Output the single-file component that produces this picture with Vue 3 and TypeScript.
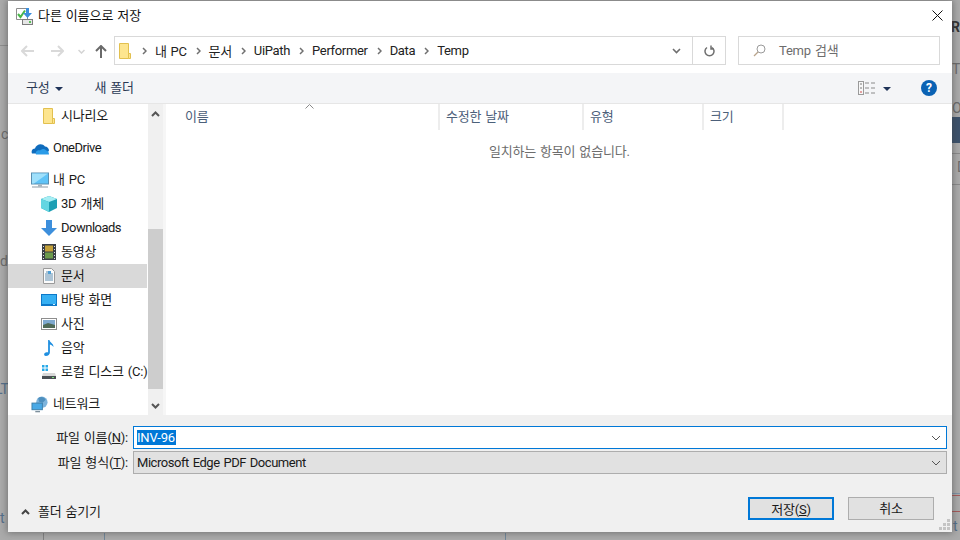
<script setup lang="ts">
interface NavItem {
  label: string
  icon: string
  depth: number
  selected?: boolean
  gap?: boolean
  tight?: boolean
}

const crumbs: string[] = ['내 PC', '문서', 'UiPath', 'Performer', 'Data', 'Temp']

const navItems: NavItem[] = [
  { label: '시나리오', icon: 'folder', depth: 1 },
  { label: 'OneDrive', icon: 'cloud', depth: 0, gap: true, tight: true },
  { label: '내 PC', icon: 'pc', depth: 0, gap: true },
  { label: '3D 개체', icon: 'cube', depth: 1 },
  { label: 'Downloads', icon: 'down', depth: 1, tight: true },
  { label: '동영상', icon: 'film', depth: 1 },
  { label: '문서', icon: 'doc', depth: 1, selected: true },
  { label: '바탕 화면', icon: 'desk', depth: 1 },
  { label: '사진', icon: 'photo', depth: 1 },
  { label: '음악', icon: 'music', depth: 1 },
  { label: '로컬 디스크 (C:)', icon: 'disk', depth: 1 },
  { label: '네트워크', icon: 'net', depth: 0, gap: true },
]

const columns: string[] = ['이름', '수정한 날짜', '유형', '크기']

// bits of the window behind the dialog that stick out at the edges
const behindText = [
  { text: 'c', left: 1, top: 125, cls: '' },
  { text: 'd', left: 0, top: 252, cls: '' },
  { text: 'LT', left: -5, top: 380, cls: 'navy' },
  { text: 't f', left: 0, top: 509, cls: 'navy' },
  { text: 'Re', left: 951, top: 18, cls: 'bold' },
  { text: 'Th', left: 952, top: 60, cls: '' },
  { text: 'O', left: 952, top: 99, cls: '' },
  { text: 'D', left: 957, top: 158, cls: '' },
  { text: 't', left: 953, top: 517, cls: 'navy' },
]
const behindLines = [
  { left: 0, top: 45, width: 8, height: 1, color: '#8e8e8e' },
  { left: 952, top: 153, width: 8, height: 1, color: '#8a8a8a' },
  { left: 952, top: 184, width: 8, height: 1, color: '#8a8a8a' },
  { left: 952, top: 493, width: 8, height: 1, color: '#7d92a6' },
  { left: 952, top: 495, width: 8, height: 1, color: '#a85a5a' },
  { left: 952, top: 511, width: 8, height: 1, color: '#a85a5a' },
  { left: 43, top: 533, width: 1, height: 7, color: '#808080' },
  { left: 104, top: 533, width: 1, height: 7, color: '#71879a' },
  { left: 505, top: 533, width: 1, height: 7, color: '#71879a' },
]
</script>

<template>
  <div class="screen">
    <span
      v-for="b in behindText"
      :key="b.text + b.top"
      class="behind-text"
      :class="b.cls"
      :style="{ left: b.left + 'px', top: b.top + 'px' }"
    >{{ b.text }}</span>
    <i
      v-for="(l, i) in behindLines"
      :key="i"
      class="behind-line"
      :style="{ left: l.left + 'px', top: l.top + 'px', width: l.width + 'px', height: l.height + 'px', background: l.color }"
    ></i>
    <i class="behind-block"></i>

    <svg class="sprite" aria-hidden="true">
      <symbol id="folder" viewBox="0 0 16 16">
        <path d="M2.5 .5h9v15h-9z" fill="#fde58f" stroke="#e2c04f" />
        <path d="M11.5 10.5h2v5h-2z" fill="#fde58f" stroke="#e2c04f" />
      </symbol>
      <symbol id="cloud" viewBox="0 0 18 12">
        <path d="M1 11c-1-2 0-5 3-5 1-4 7-6 10-2 2 0 4 2 4 4l-2 3z" fill="#0f6cbd" />
        <path d="M5 12c-1-2 1-5 4-4 2-2 5-2 6 0 2 0 3 2 3 4z" fill="#2a9be8" />
      </symbol>
      <symbol id="pc" viewBox="0 0 18 16">
        <rect x=".5" y=".5" width="17" height="11" fill="#5fc3f7" stroke="#5a8fb0" />
        <path d="M1 1h16L3 11H1z" fill="#9fe0fb" />
        <path d="M7 12h4v2H7z" fill="#a8b4bc" />
        <path d="M1 14.5h16" stroke="#8b9aa5" />
      </symbol>
      <symbol id="cube" viewBox="0 0 16 16">
        <path d="M8 0l8 3v9l-8 4-8-4V3z" fill="#1c9fb4" />
        <path d="M8 0l8 3-8 3-8-3z" fill="#a6eef4" />
        <path d="M0 3l8 3v10l-8-4z" fill="#63d6e2" />
      </symbol>
      <symbol id="down" viewBox="0 0 16 16">
        <path d="M5 0h6v8h5l-8 8-8-8h5z" fill="#3d8fdc" />
      </symbol>
      <symbol id="film" viewBox="0 0 16 16">
        <rect width="14" height="16" x="1" fill="#3a3f45" />
        <rect width="8" height="6" x="4" y="1.5" fill="#c4a13a" />
        <rect width="8" height="6" x="4" y="8.5" fill="#6b9a4c" />
        <path d="M2 2h1v1H2zm0 3h1v1H2zm0 3h1v1H2zm0 3h1v1H2zm0 3h1v1H2zm11-12h1v1h-1zm0 3h1v1h-1zm0 3h1v1h-1zm0 3h1v1h-1zm0 3h1v1h-1z" fill="#dfe3e6" />
      </symbol>
      <symbol id="doc" viewBox="0 0 16 16">
        <path d="M2.5 .5h8l3 3v12h-11z" fill="#fbfbfb" stroke="#9a9a9a" />
        <path d="M5 4h4M4 6h8M4 8h8M4 10h8M4 12h8" stroke="#5f8db0" />
        <path d="M7 3h3v3H7z" fill="#4f9fd4" />
      </symbol>
      <symbol id="desk" viewBox="0 0 16 12">
        <rect width="16" height="12" fill="#0d79c9" />
        <rect x="1" y="1" width="14" height="9" fill="#36b0f3" />
        <path d="M12 10.500h2" stroke="#cfefff" />
      </symbol>
      <symbol id="photo" viewBox="0 0 16 12">
        <rect x=".5" y=".5" width="15" height="11" fill="#fff" stroke="#8e8e8e" />
        <rect x="2" y="2" width="12" height="8" fill="#7fa9cf" />
        <path d="M2 7l5-2 7 2v3H2z" fill="#4f6a57" />
      </symbol>
      <symbol id="music" viewBox="0 0 14 18">
        <path d="M6 0h1.500c.5 3 5 4 4.500 8-1-2-3-3-4-3v9c0 2-2 4-4.500 4C1.500 18 1 16 2 15s3-1.500 4-1z" fill="#1f8fe0" />
      </symbol>
      <symbol id="disk" viewBox="0 0 16 16">
        <path d="M1 1h2.500v2.500H1zm3.500 0H7v2.500H4.500zM1 4.500h2.500V7H1zm3.500 0H7V7H4.500z" fill="#27a9e8" />
        <path d="M2 9h12l1 3H1z" fill="#d8d8d8" />
        <rect x="1" y="12" width="14" height="3" fill="#4a4f54" />
        <rect x="11" y="13" width="2" height="1" fill="#7be07b" />
      </symbol>
      <symbol id="net" viewBox="0 0 18 18">
        <circle cx="11" cy="6.500" r="6" fill="#7eb4dc" />
        <path d="M7 2c3-2 7-1 8 2l-3 3-4-1z" fill="#4e8fbe" />
        <rect x=".5" y="7.500" width="11" height="7" fill="#49a9e6" stroke="#3c7ea8" />
        <path d="M4 16.500h5" stroke="#7d8f9c" stroke-width="1.500" />
      </symbol>
    </svg>

    <section class="dialog">
      <header class="title-bar">
        <svg class="title-icon" width="17" height="17" viewBox="0 0 17 17">
          <path d="M.5.500h11v11H.5z" fill="#fff" stroke="#8c8c8c" />
          <path d="M2 6l2.500 3L9 2.500" fill="none" stroke="#48b848" stroke-width="2" />
          <path d="M10 0h3v5h3l-4.500 5L7 5h3z" fill="#3c8fdc" />
          <rect x="6.500" y="11.500" width="10" height="5" fill="#e6e6e6" stroke="#7c7c7c" />
          <rect x="13" y="13" width="2" height="2" fill="#58c458" />
        </svg>
        <span class="title">다른 이름으로 저장</span>
        <svg class="close" width="11" height="11" viewBox="0 0 11 11">
          <path d="M.5.500l10 10M10.500.500l-10 10" stroke="#111" fill="none" />
        </svg>
      </header>

      <div class="nav-bar">
        <svg class="arrow" width="13" height="12" viewBox="0 0 13 12"><path d="M6 1L1 6l5 5M1 6h12" stroke="#d9d9d9" stroke-width="2" fill="none" /></svg>
        <svg class="arrow fwd" width="13" height="12" viewBox="0 0 13 12"><path d="M7 1l5 5-5 5M12 6H0" stroke="#d9d9d9" stroke-width="2" fill="none" /></svg>
        <svg class="arrow drop" width="7" height="5" viewBox="0 0 7 5"><path d="M.5 1l3 3 3-3" stroke="#d4d4d4" stroke-width="1.500" fill="none" /></svg>
        <svg class="arrow up" width="12" height="13" viewBox="0 0 12 13"><path d="M1 6l5-5 5 5M6 1v12" stroke="#6a6a6a" stroke-width="2" fill="none" /></svg>

        <div class="address">
          <svg class="crumb-icon" width="16" height="18"><use href="#folder" /></svg>
          <template v-for="c in crumbs" :key="c">
            <svg class="crumb-sep" width="5" height="8" viewBox="0 0 5 8"><path d="M1 1l3 3-3 3" stroke="#707070" stroke-width="1.500" fill="none" /></svg>
            <span class="crumb">{{ c }}</span>
          </template>
          <span class="spacer"></span>
          <svg class="addr-drop" width="9" height="6" viewBox="0 0 9 6"><path d="M1 1l3.500 3.500L8 1" stroke="#6f6f6f" stroke-width="1.600" fill="none" /></svg>
          <div class="refresh">
            <svg width="11" height="12" viewBox="0 0 11 12"><path d="M3 2.500a4.500 4.500 0 1 0 5 0M7 .5v3.500h3" stroke="#707070" stroke-width="1.500" fill="none" /></svg>
          </div>
        </div>

        <div class="search">
          <svg width="13" height="13" viewBox="0 0 13 13"><circle cx="8" cy="5" r="4" fill="none" stroke="#9a9a9a" /><path d="M5 8l-4 4" stroke="#b9a48c" stroke-width="1.200" /></svg>
          <span class="search-text">Temp 검색</span>
        </div>
      </div>

      <div class="toolbar">
        <span class="tool">구성</span>
        <i class="caret"></i>
        <span class="tool new-folder">새 폴더</span>
        <span class="spacer"></span>
        <svg class="view" width="17" height="14" viewBox="0 0 17 14">
          <rect x=".5" y=".5" width="5" height="13" fill="#f7f7f7" stroke="#9a9a9a" />
          <path d="M2 3h2M2 7h2" stroke="#7a7a7a" />
          <path d="M2 11h2" stroke="#d04a4a" />
          <path d="M7 2h4M13 2h4M7 7h4M13 7h4M7 12h4M13 12h4" stroke="#8a8a8a" />
        </svg>
        <i class="caret view-caret"></i>
        <span class="help">?</span>
      </div>

      <div class="body">
        <nav class="tree">
          <div
            v-for="item in navItems"
            :key="item.label"
            class="tree-row"
            :class="{ selected: item.selected, gap: item.gap, top: item.depth === 0 }"
          >
            <svg class="tree-icon"><use :href="'#' + item.icon" /></svg>
            <span class="tree-label" :class="{ tight: item.tight }">{{ item.label }}</span>
          </div>
        </nav>

        <div class="scrollbar">
          <svg class="scroll-up" width="9" height="6" viewBox="0 0 9 6"><path d="M1 5l3.500-3.500L8 5" stroke="#555" stroke-width="2" fill="none" /></svg>
          <div class="thumb"></div>
          <svg class="scroll-down" width="9" height="6" viewBox="0 0 9 6"><path d="M1 1l3.500 3.500L8 1" stroke="#555" stroke-width="2" fill="none" /></svg>
        </div>

        <div class="list">
          <div class="list-head">
            <span v-for="c in columns" :key="c" class="col">{{ c }}</span>
            <svg class="sort" width="9" height="5" viewBox="0 0 9 5"><path d="M.5 4.500l4-4 4 4" stroke="#8a8a8a" fill="none" /></svg>
          </div>
          <p class="empty">일치하는 항목이 없습니다.</p>
        </div>
      </div>

      <footer class="bottom">
        <div class="field">
          <label class="field-label">파일 이름(<u>N</u>):</label>
          <div class="input focused">
            <span class="selection">INV-96</span>
            <svg width="10" height="6" viewBox="0 0 10 6"><path d="M1 1l4 4 4-4" stroke="#555" fill="none" /></svg>
          </div>
        </div>
        <div class="field">
          <label class="field-label">파일 형식(<u>T</u>):</label>
          <div class="input combo">
            <span class="combo-text">Microsoft Edge PDF Document</span>
            <svg width="10" height="6" viewBox="0 0 10 6"><path d="M1 1l4 4 4-4" stroke="#555" fill="none" /></svg>
          </div>
        </div>
        <div class="actions">
          <svg class="hide-icon" width="9" height="6" viewBox="0 0 9 6"><path d="M1 5l3.500-3.500L8 5" stroke="#444" stroke-width="2" fill="none" /></svg>
          <span class="hide-label">폴더 숨기기</span>
          <span class="spacer"></span>
          <button class="btn primary">저장(<u>S</u>)</button>
          <button class="btn">취소</button>
        </div>
        <svg class="grip" width="12" height="11" viewBox="0 0 12 11">
          <path d="M8 0h3v3H8zM4 4h3v3H4zm4 0h3v3H8zM0 8h3v3H0zm4 0h3v3H4zm4 0h3v3H8z" fill="#c4c4c4" />
        </svg>
      </footer>
    </section>
  </div>
</template>

<style>
html,
body {
  margin: 0;
  overflow: hidden;
}
</style>

<style scoped>
.screen {
  position: relative;
  width: 960px;
  height: 540px;
  box-sizing: border-box;
  padding: 1px 8px 8px;
  overflow: hidden;
  background: #ababab;
  font-family: Roboto, "Noto Sans CJK KR", sans-serif;
  font-size: 13px;
  letter-spacing: -0.2px;
  word-spacing: 1px;
  color: #1a1a1a;
}

.sprite {
  position: absolute;
  width: 0;
  height: 0;
}

.behind-text {
  position: absolute;
  font-size: 14px;
  line-height: 18px;
  color: #6c6c6c;
}
.behind-text.navy {
  color: #54708c;
}
.behind-text.bold {
  color: #333;
  font-weight: 700;
}
.behind-line {
  position: absolute;
}
.behind-block {
  position: absolute;
  left: 952px;
  top: 117px;
  width: 8px;
  height: 26px;
  background: #3c526c;
}

.dialog {
  position: relative;
  width: 944px;
  height: 531px;
  display: flex;
  flex-direction: column;
  background: #fff;
  box-shadow: 0 0 7px 1px rgba(60, 60, 60, 0.5);
}

.spacer {
  flex: 1;
}

.title-bar {
  height: 29px;
  flex: none;
  display: flex;
  align-items: center;
  padding-left: 8px;
}
.title-icon {
  margin-top: 1px;
}
.title {
  margin-left: 5px;
  margin-top: -3px;
  letter-spacing: 0;
  word-spacing: 0.5px;
  color: #111;
}
.close {
  margin-left: auto;
  margin-right: 9px;
}

.nav-bar {
  height: 43px;
  flex: none;
  display: flex;
  align-items: flex-start;
  padding-top: 6px;
  box-sizing: border-box;
}
.arrow {
  margin-top: 9px;
  flex: none;
}
.arrow:first-child {
  margin-left: 13px;
}
.fwd {
  margin-left: 17px;
}
.drop {
  margin-left: 14px;
  margin-top: 13px;
}
.up {
  margin-left: 10px;
}
.address {
  width: 612px;
  height: 29px;
  margin-left: 7px;
  box-sizing: border-box;
  border: 1px solid #d9d9d9;
  display: flex;
  align-items: center;
  padding-left: 2px;
  color: #222;
}
.crumb-icon {
  flex: none;
}
.crumb-sep {
  margin: 0 8px 0 9px;
  flex: none;
}
.crumb-sep:first-of-type {
  margin-left: 7px;
}
.crumb {
  letter-spacing: -0.33px;
}
.addr-drop {
  margin-right: 11px;
}
.refresh {
  width: 33px;
  height: 27px;
  box-sizing: border-box;
  border-left: 1px solid #d9d9d9;
  display: flex;
  align-items: center;
  justify-content: center;
}
.search {
  width: 202px;
  height: 29px;
  margin-left: 12px;
  box-sizing: border-box;
  border: 1px solid #d9d9d9;
  display: flex;
  align-items: center;
  gap: 13px;
  padding-left: 14px;
  color: #6d6d6d;
}
.search-text {
  margin-top: -2px;
}

.toolbar {
  height: 31px;
  flex: none;
  box-sizing: border-box;
  display: flex;
  align-items: center;
  padding-left: 18px;
  background: #f4f5f7;
  border-bottom: 1px solid #e6e6e6;
  color: #2b3a55;
}
.tool {
  margin-top: -3px;
}
.caret {
  width: 0;
  height: 0;
  margin-left: 5px;
  margin-top: 1px;
  border: 4px solid transparent;
  border-top: 4px solid #1f3358;
  border-bottom: 0;
}
.new-folder {
  margin-left: 32px;
}
.view {
  margin-right: -1px;
}
.view-caret {
  margin-left: 9px;
}
.help {
  width: 16px;
  height: 16px;
  margin: 0 15px 0 30px;
  border-radius: 50%;
  background: #0a62b4;
  color: #fff;
  font-size: 12px;
  font-weight: 700;
  line-height: 16px;
  text-align: center;
}

.body {
  height: 311px;
  flex: none;
  display: flex;
}
.tree {
  width: 140px;
  flex: none;
  overflow: hidden;
}
.tree-row {
  height: 24px;
  display: flex;
  align-items: center;
  padding-left: 33px;
  box-sizing: border-box;
  white-space: nowrap;
}
.tree-row.top {
  padding-left: 23px;
}
.tree-row.gap {
  margin-top: 8px;
}
.tree-row.selected {
  margin-right: 1px;
  background: #d9d9d9;
}
.tree-icon {
  width: 16px;
  height: 16px;
  flex: none;
}
.tree-row.top .tree-icon {
  width: 18px;
  height: 17px;
}
.tree-label {
  margin-left: 4px;
  margin-top: -3px;
  color: #1a1a1a;
}
.tree-label.tight {
  margin-top: -1px;
  letter-spacing: -0.5px;
}
.scrollbar {
  position: relative;
  width: 15px;
  flex: none;
  background: #f0f0f0;
}
.thumb {
  position: absolute;
  left: 0;
  right: 0;
  top: 125px;
  height: 160px;
  background: #cdcdcd;
}
.scroll-up {
  position: absolute;
  left: 3px;
  top: 7px;
}
.scroll-down {
  position: absolute;
  left: 3px;
  top: 299px;
}
.list {
  flex: 1;
  margin-left: 3px;
  box-shadow: -3px 0 0 #f6f6f6;
  min-width: 0;
}
.list-head {
  position: relative;
  height: 26px;
  display: grid;
  grid-template-columns: 274px 144px 120px 80px;
  color: #4c607a;
}
.col {
  display: flex;
  align-items: center;
  padding: 0 0 3px 6px;
  border-right: 2px solid #ededed;
  box-sizing: border-box;
}
.col:first-child {
  padding-left: 19px;
}
.sort {
  position: absolute;
  left: 139px;
  top: 0;
}
.empty {
  margin: 12px 0 0;
  padding-left: 323px;
  color: #6d6d6d;
  line-height: 20px;
}

.bottom {
  position: relative;
  flex: 1;
  box-sizing: border-box;
  padding: 11px 5px 0 0;
  background: #f0f0f0;
}
.field {
  display: flex;
  align-items: center;
  height: 23px;
  margin-bottom: 2px;
}
.field-label {
  width: 125px;
  flex: none;
  padding: 0 5px 2px 0;
  box-sizing: border-box;
  text-align: right;
  white-space: nowrap;
  color: #222;
}
.input {
  flex: 1;
  height: 23px;
  box-sizing: border-box;
  display: flex;
  align-items: center;
  justify-content: space-between;
  padding: 0 5px 0 3px;
  border: 1px solid #adadad;
  background: #e1e1e1;
}
.input.focused {
  border-color: #0078d7;
  background: #fff;
}
.selection {
  background: #0078d7;
  color: #fff;
  line-height: 15px;
  padding: 0 1px 0 0;
}
.combo-text {
  letter-spacing: -0.45px;
}
.actions {
  position: absolute;
  left: 0;
  right: 18px;
  top: 82px;
  display: flex;
  align-items: center;
  height: 23px;
}
.hide-icon {
  margin-left: 13px;
  margin-top: 6px;
}
.hide-label {
  margin-left: 8px;
  margin-top: 3px;
}
.btn {
  width: 86px;
  height: 23px;
  margin-left: 14px;
  padding: 0 0 2px;
  border: 1px solid #adadad;
  background: #e1e1e1;
  color: #1a1a1a;
  font: inherit;
  letter-spacing: inherit;
}
.btn.primary {
  border: 2px solid #0078d7;
}
.grip {
  position: absolute;
  right: 1px;
  bottom: 2px;
}
</style>
